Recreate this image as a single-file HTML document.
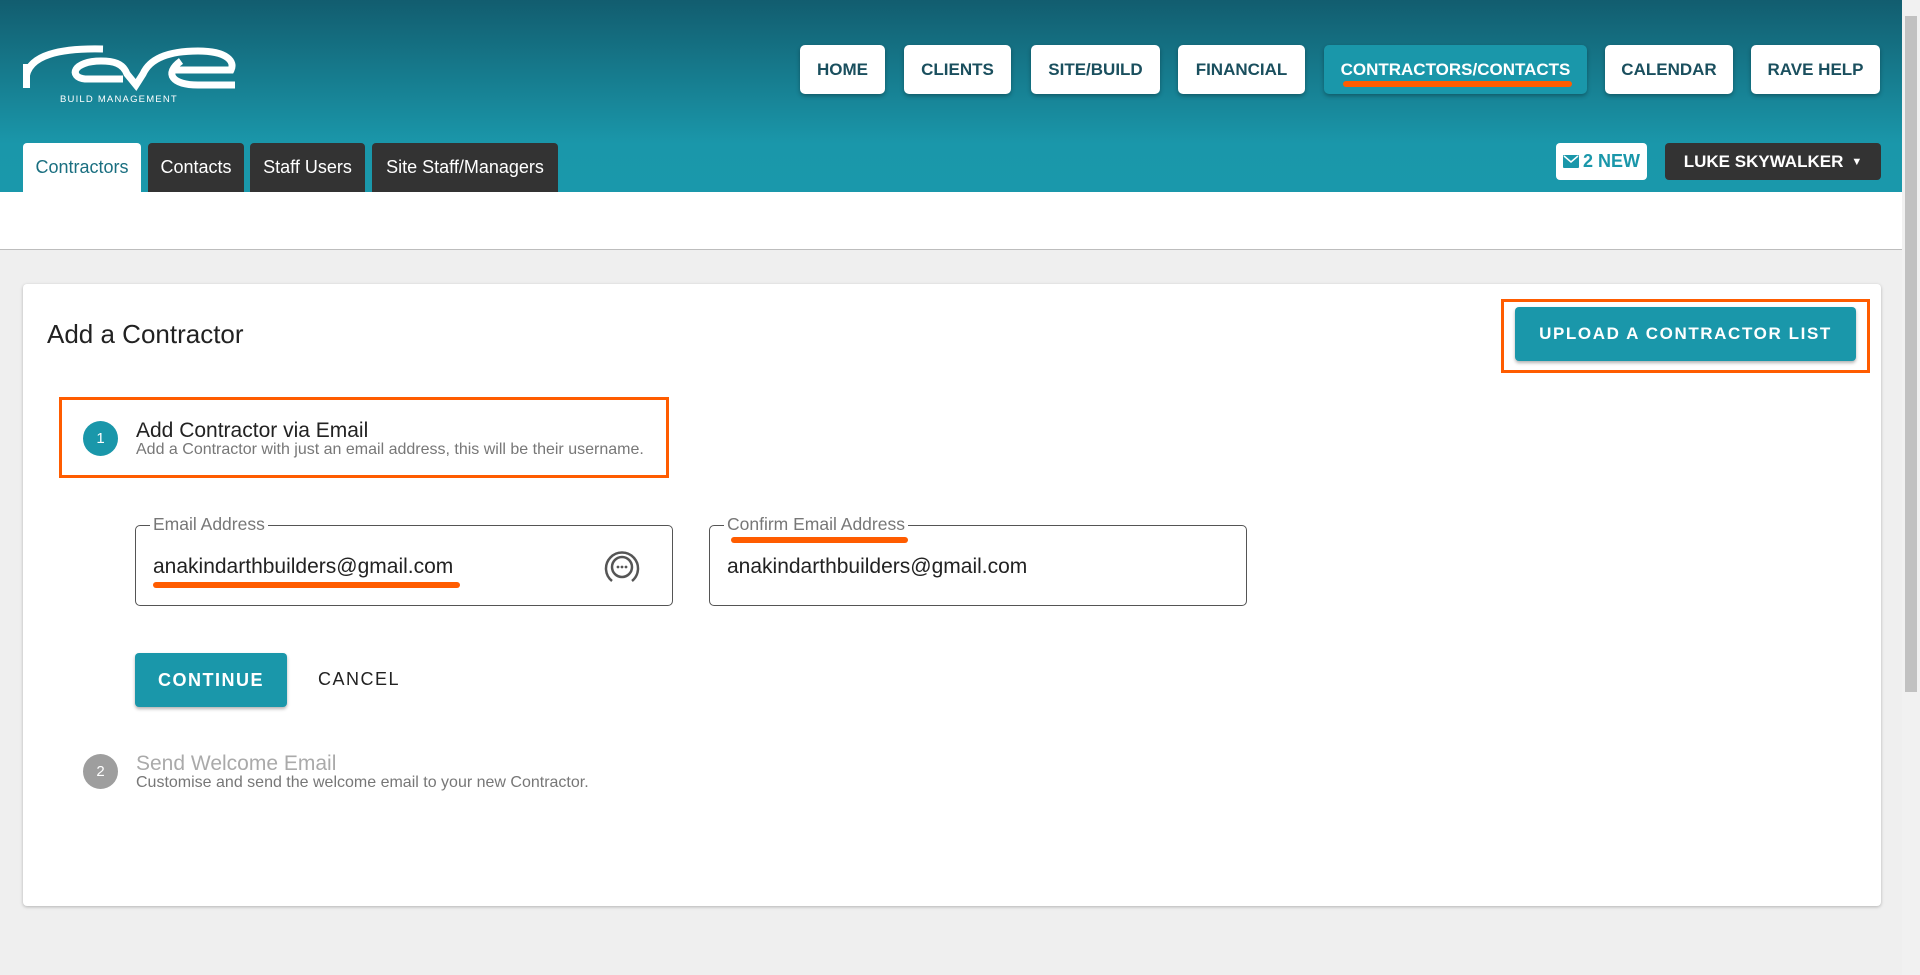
<!DOCTYPE html>
<html><head><meta charset="utf-8"><style>
*{box-sizing:border-box;margin:0;padding:0}
body{width:1920px;height:975px;overflow:hidden;background:#efefef;font-family:"Liberation Sans",sans-serif;position:relative}
.hdr{position:absolute;left:0;top:0;width:1902px;height:192px;background:linear-gradient(#125d6f,#1a97aa 75%,#1a98ab)}
.band{position:absolute;left:0;top:192px;width:1902px;height:58px;background:#fff;border-bottom:1px solid #bdbdbd}
.sb{position:absolute;right:0;top:0;width:18px;height:975px;background:#f1f1f1}
.sb div{position:absolute;left:3px;top:16px;width:12px;height:676px;background:#c1c1c1}
.nav{position:absolute;top:45px;height:49px;background:#fff;border-radius:5px;color:#1a4f5e;font-weight:bold;font-size:17px;display:flex;align-items:center;justify-content:center;box-shadow:0 2px 4px rgba(0,0,0,.3)}
.nav.act{background:#1a97aa;color:#fff}
.tab{position:absolute;top:143px;height:49px;background:#333;color:#fff;font-size:18px;display:flex;align-items:center;justify-content:center;border-radius:4px 4px 0 0}
.tab.w{background:#fff;color:#1a6f80}
.card{position:absolute;left:23px;top:284px;width:1858px;height:622px;background:#fff;border-radius:4px;box-shadow:0 1px 3px rgba(0,0,0,.25)}
.abs{position:absolute}
.circ{position:absolute;width:35px;height:35px;border-radius:50%;color:#fff;font-size:15px;display:flex;align-items:center;justify-content:center}
.field{position:absolute;top:525px;width:538px;height:81px;border:1px solid #555;border-radius:5px}
.lbl{position:absolute;top:-12px;left:14px;background:#fff;padding:0 3px;font-size:17.5px;color:#777}
.val{position:absolute;top:29px;left:17px;font-size:21px;color:#222}
.or{position:absolute;background:#ff5c00;border-radius:3px}
</style></head><body>
<div class="hdr"></div>
<div class="band"></div>
<div class="sb"><div></div></div>
<svg class="abs" style="left:23px;top:44px" width="214" height="60" viewBox="0 0 214 60">
<g fill="none" stroke="#fff" stroke-width="7">
<path d="M3 36 C3 10 40 4 80 5"/>
<path d="M78 17 C50 17 45 33 62 35 L100 35"/>
<path d="M78 17 C90 17 100 19 104 30 L113 41 L120 30 C128 12 150 7 175 7 C205 7 212 18 208 26 L150 26"/>
<path d="M158 17 C140 30 150 41 175 41 L212 41"/>
</g>
<rect x="0" y="20" width="7" height="24" fill="#fff"/>
<text x="37" y="58" fill="#fff" font-size="9.5" letter-spacing="1.2" font-family="Liberation Sans">BUILD MANAGEMENT</text>
</svg>
<div class="nav" style="left:800px;width:85px">HOME</div>
<div class="nav" style="left:904px;width:107px">CLIENTS</div>
<div class="nav" style="left:1031px;width:129px">SITE/BUILD</div>
<div class="nav" style="left:1178px;width:127px">FINANCIAL</div>
<div class="nav act" style="left:1324px;width:263px">CONTRACTORS/CONTACTS</div>
<div class="or" style="left:1343px;top:81px;width:229px;height:6px"></div>
<div class="nav" style="left:1605px;width:128px">CALENDAR</div>
<div class="nav" style="left:1751px;width:129px">RAVE HELP</div>
<div class="tab w" style="left:23px;width:118px">Contractors</div>
<div class="tab" style="left:148px;width:96px">Contacts</div>
<div class="tab" style="left:250px;width:115px">Staff Users</div>
<div class="tab" style="left:372px;width:186px">Site Staff/Managers</div>
<div class="abs" style="left:1556px;top:143px;width:91px;height:37px;background:#fff;border-radius:4px;color:#1a97aa;font-weight:bold;font-size:18px;display:flex;align-items:center;justify-content:center;gap:4px"><svg width="16" height="13" viewBox="0 0 16 13"><rect width="16" height="13" rx="1" fill="#1a97aa"/><path d="M1 1 L8 7 L15 1" stroke="#fff" stroke-width="1.5" fill="none"/></svg>2 NEW</div>
<div class="abs" style="left:1665px;top:143px;width:216px;height:37px;background:#333;border-radius:4px;color:#fff;font-weight:bold;font-size:17px;display:flex;align-items:center;justify-content:center;gap:8px">LUKE SKYWALKER <span style="font-size:11px">&#9660;</span></div>
<div class="card"></div>
<div class="abs" style="left:47px;top:319px;font-size:26px;color:#222">Add a Contractor</div>
<div class="abs" style="left:1501px;top:299px;width:369px;height:74px;border:3px solid #ff5c00"></div>
<div class="abs" style="left:1515px;top:307px;width:341px;height:54px;background:#1a97aa;border-radius:4px;color:#fff;font-weight:bold;font-size:17px;letter-spacing:1.6px;display:flex;align-items:center;justify-content:center;box-shadow:0 2px 3px rgba(0,0,0,.3)">UPLOAD A CONTRACTOR LIST</div>
<div class="abs" style="left:59px;top:397px;width:610px;height:81px;border:3px solid #ff5c00"></div>
<div class="circ" style="left:83px;top:421px;background:#1a97aa">1</div>
<div class="abs" style="left:136px;top:419px;font-size:21px;color:#222">Add Contractor via Email</div>
<div class="abs" style="left:136px;top:441px;font-size:16px;color:#777">Add a Contractor with just an email address, this will be their username.</div>
<div class="field" style="left:135px"><div class="lbl">Email Address</div><div class="val">anakindarthbuilders@gmail.com</div>
<svg class="abs" style="left:466px;top:21px" width="40" height="40" viewBox="0 0 40 40"><g fill="none" stroke="#555" stroke-width="2.5"><path d="M10 34 A16 16 0 1 1 30 34"/><circle cx="20" cy="20" r="10"/></g><g fill="#555"><circle cx="16" cy="20" r="1.4"/><circle cx="20" cy="20" r="1.4"/><circle cx="24" cy="20" r="1.4"/></g></svg></div>
<div class="or" style="left:153px;top:582px;width:307px;height:6px"></div>
<div class="field" style="left:709px"><div class="lbl">Confirm Email Address</div><div class="val">anakindarthbuilders@gmail.com</div></div>
<div class="or" style="left:731px;top:537px;width:177px;height:6px"></div>
<div class="abs" style="left:135px;top:653px;width:152px;height:54px;background:#1a97aa;border-radius:4px;color:#fff;font-weight:bold;font-size:18px;letter-spacing:1.5px;display:flex;align-items:center;justify-content:center;box-shadow:0 2px 3px rgba(0,0,0,.3)">CONTINUE</div>
<div class="abs" style="left:318px;top:669px;font-size:18px;letter-spacing:1.5px;color:#222">CANCEL</div>
<div class="circ" style="left:83px;top:754px;background:#9e9e9e">2</div>
<div class="abs" style="left:136px;top:752px;font-size:21px;color:#aaa">Send Welcome Email</div>
<div class="abs" style="left:136px;top:774px;font-size:16px;color:#777">Customise and send the welcome email to your new Contractor.</div>
</body></html>
